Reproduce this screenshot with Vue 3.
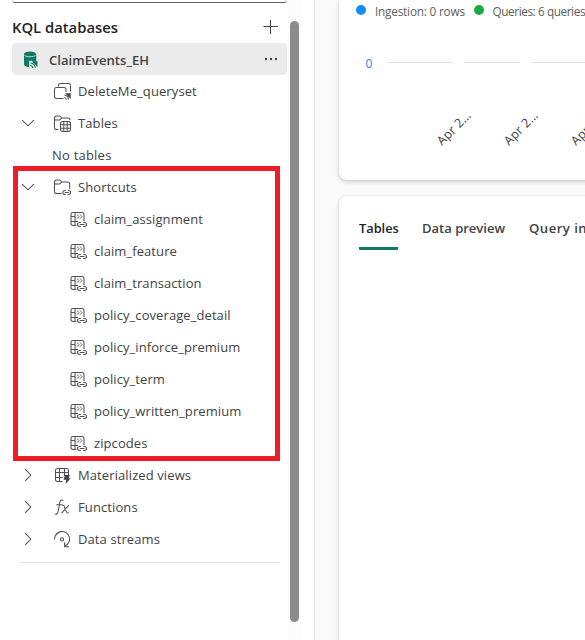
<script setup>
const rows = [
  { label: 'DeleteMe_queryset', icon: 'queryset', level: 1 },
  { label: 'Tables', icon: 'tables', level: 1, arrow: 'down' },
  { label: 'No tables', level: 0 },
  { label: 'Shortcuts', icon: 'shortcuts', level: 1, arrow: 'down' },
  { label: 'claim_assignment', icon: 'link', level: 2 },
  { label: 'claim_feature', icon: 'link', level: 2 },
  { label: 'claim_transaction', icon: 'link', level: 2 },
  { label: 'policy_coverage_detail', icon: 'link', level: 2 },
  { label: 'policy_inforce_premium', icon: 'link', level: 2 },
  { label: 'policy_term', icon: 'link', level: 2 },
  { label: 'policy_written_premium', icon: 'link', level: 2 },
  { label: 'zipcodes', icon: 'link', level: 2 },
  { label: 'Materialized views', icon: 'views', level: 1, arrow: 'right' },
  { label: 'Functions', icon: 'fx', level: 1, arrow: 'right' },
  { label: 'Data streams', icon: 'streams', level: 1, arrow: 'right' },
]
const ticks = [0, 67, 134]
</script>

<template>
  <div class="page">
    <aside class="side">
      <div class="search"></div>
      <header class="head">
        <h2>KQL databases</h2>
        <svg width="16" height="16" viewBox="0 0 16 16"><path d="M7.500 1v14M.5 7.500h14.500" class="s plus" /></svg>
      </header>
      <div class="db">
        <svg class="cyl" width="16" height="18" viewBox="0 0 16 18">
          <path d="M1 3v10.500c0 1.500 2.200 2.500 5 2.500l.3-.1V10.500h7V3z" fill="#117865" />
          <ellipse cx="7" cy="3" rx="6" ry="2.500" fill="#117865" />
          <path d="M1.300 4.200C3 6.300 11 6.300 12.700 4.200" fill="none" stroke="#e4f1ed" stroke-width=".8" />
          <path d="M6.300 9.700h3l6 6V18h-9z" fill="#ebebeb" />
          <path d="M8.700 10.300h5.800v5.800z" fill="#117865" />
          <path d="M7.500 12q4.300 .5 4.800 4.800M7.200 14.500q2.300 .2 2.700 2.500" fill="none" stroke="#117865" stroke-width="1.200" />
        </svg>
        <span class="t semi">ClaimEvents_EH</span>
        <svg class="dots" width="14" height="4" viewBox="0 0 14 4"><circle cx="2" cy="2" r="1.200" /><circle cx="7" cy="2" r="1.200" /><circle cx="12" cy="2" r="1.200" /></svg>
      </div>

      <div v-for="r in rows" :key="r.label" class="row" :class="'l' + r.level">
        <span v-if="r.level === 1" class="chev">
          <svg v-if="r.arrow" width="14" height="14" viewBox="0 0 14 14" :class="r.arrow"><path d="M4.200 1.200 9.800 7l-5.600 5.800" class="s" /></svg>
        </span>
        <svg v-if="r.icon" class="icon" width="18" height="18" viewBox="0 0 18 18">
          <g v-if="r.icon === 'queryset'" class="s">
            <path d="M4.500 3.500V2.500Q4.500 .5 6.500 .5h8Q16.500 .5 16.500 2.500V8.500M9.500 15.500H2.500Q.5 15.500 .5 13.500V6.500Q.5 4.500 2.500 4.500H10q2 0 2 2V9" />
            <path d="M11 10.300h5.700v5.700z" fill="#424242" stroke="none" />
            <path d="M10.500 12q3.500.5 4 4.500M10.300 14.500q1.500.2 2 2" />
          </g>
          <g v-else-if="r.icon === 'tables'" class="s">
            <path d="M4.500 14.500H3Q.5 14.500 .5 12.500V3Q.5 1 2.500 1h3.300l2 2H14q2 0 2 2M.5 5h5L7.800 3.200" />
            <rect x="6.500" y="6.500" width="10" height="10" rx="2.200" />
            <path d="M9.800 6.500v10M13.200 6.500v10M6.500 9.800h10M6.500 13.200h10" />
          </g>
          <g v-else-if="r.icon === 'shortcuts'" class="s">
            <path d="M7.500 14.500H3Q.5 14.500 .5 12.500V3Q.5 1 2.500 1h3.300l2 2H13.500Q15.700 3 15.700 5V10M.5 5h5L7.800 3.200" />
            <path d="M11.800 11.500h-.9a2 2 0 0 0 0 4h.9M13.700 11.500h.9a2 2 0 0 1 0 4h-.9M10.800 13.500h4" />
          </g>
          <g v-else-if="r.icon === 'link'" class="s" transform="translate(-.5 1)">
            <path d="M6.500 13.500H3.500Q1.500 13.500 1.500 11.500V2.500Q1.500 .5 3.500 .5h8.500Q14.500 .5 14.500 2.500v6.500M5.500 .5v13M1.500 4.500h4M1.500 9.500h7" />
            <path d="m7.500 2.500 2 2.100-2 2.100M10.500 2.500l2 2.100-2 2.100" stroke-width=".9" />
            <path d="M11.300 10.500H10a2 2 0 0 0 0 4h1.300M13.700 10.500h1.300a2 2 0 0 1 0 4h-1.300M10.200 12.500h4.700" />
          </g>
          <g v-else-if="r.icon === 'views'" class="s" transform="translate(0 1)">
            <path d="M8.500 13.500H3.500Q1.500 13.500 1.500 11.500V2.500Q1.500 .5 3.500 .5H12Q14.500 .5 14.500 2.500V7M5.500 .5v13M10.500 .5V8M1.500 4.500h13M1.500 9.500h7.500" />
            <path d="M11 7h4.800l-1 3.200h2l-5.300 5.800 .7-4.200H9.500z" fill="#424242" stroke="none" />
          </g>
          <g v-else-if="r.icon === 'fx'" class="s">
            <path d="M9.300 1.500C7.200.3 6.200 1.200 5.800 3.500L4.100 12.700C3.700 15.200 2.400 15.800.7 14.900M2.300 5.700h6M7.900 6.500c1.500-.8 2.200-.2 2.900 2l1.300 3.600c.7 2 1.400 2.300 2.800 1.500M15 6.100l-7.500 8" />
          </g>
          <g v-else class="s">
            <path d="M.6 8.500A7.500 7.500 0 1 1 11 14.900M10.600 11.300V15.700h4.400M2.800 4l.5-.5" />
            <circle cx="8" cy="8.300" r="1.600" />
          </g>
        </svg>
        <span class="t">{{ r.label }}</span>
      </div>
      <div class="rule"></div>
      <div class="marker"></div>
      <div class="track"><div class="thumb"></div></div>
    </aside>

    <main class="main">
      <section class="card chart">
        <svg width="246" height="180" viewBox="0 0 246 180">
          <circle cx="22" cy="10" r="5" fill="#118dff" />
          <text x="36" y="16" class="leg" textLength="90">Ingestion: 0 rows</text>
          <circle cx="140" cy="10" r="5" fill="#1aab40" />
          <text x="153.500" y="16" class="leg" textLength="93">Queries: 6 queries</text>
          <text x="26.500" y="68" class="zero">0</text>
          <path d="M48 62.500h65M125 62.500h56M192 62.500h54" stroke="#e1e1e1" />
          <text v-for="t in ticks" :key="t" class="tick" :transform="`translate(${103 + t} 146) rotate(-45)`">Apr 2…</text>
        </svg>
      </section>
      <section class="card panel">
        <nav class="tabs">
          <span class="tab on">Tables</span>
          <span class="tab preview">Data preview</span>
          <span class="tab insights">Query insights</span>
        </nav>
      </section>
    </main>
  </div>
</template>

<style>
body { overflow: hidden; }
</style>

<style scoped>
.page { display: flex; width: 585px; height: 640px; overflow: hidden; background: #fff; font-family: "Open Sans", sans-serif; font-size: 13px; color: #424242; }
.side { position: relative; box-sizing: border-box; flex: none; width: 315px; height: 640px; padding-left: 12px; border-right: 1px solid #e0e0e0; }
.search { box-sizing: border-box; width: 275px; height: 3px; border: 1px solid #d1d1d1; border-top: 0; border-bottom-color: #616161; border-radius: 0 0 4px 4px; }
.head { display: flex; align-items: center; justify-content: space-between; width: 267px; height: 40px; padding-top: 8px; box-sizing: border-box; }
h2 { margin: 0; font-size: 14.800px; font-weight: 600; line-height: 20px; color: #242424; }
.db { box-sizing: border-box; display: flex; align-items: center; width: 275px; height: 32px; padding: 0 9px 0 11px; border-radius: 4px; background: #ebebeb; }
.db .t { margin-left: 10px; padding-top: 2px; }
.cyl { margin-top: 2px; }
.dots { margin-left: auto; fill: #424242; }
.semi { font-weight: 600; letter-spacing: .05px; }
.row { display: flex; align-items: center; height: 32px; white-space: nowrap; }
.l0 { padding-left: 40px; letter-spacing: .22px; }
.l1 { letter-spacing: .1px; }
.l2 { padding-left: 58px; letter-spacing: .08px; }
.chev { display: flex; width: 42px; padding-left: 9px; box-sizing: border-box; }
.down { transform: rotate(90deg); }
.icon { flex: none; margin: 2px 6px 0 0; }
.s { fill: none; stroke: #505050; stroke-width: 1.050; }
.plus { stroke: #424242; }
.rule { width: 259px; height: 1px; margin: 7px 0 0 8px; background: #e0e0e0; }
.marker { position: absolute; box-sizing: border-box; left: 13px; top: 166px; width: 267px; height: 295px; border: 5px solid #ee1c25; }
.track { position: absolute; box-sizing: border-box; left: 287px; top: 0; width: 15px; height: 640px; padding: 21px 3px 18px; background: #fcfcfc; }
.thumb { height: 601px; border-radius: 5px; background: #8b8b8b; }
.main { display: flex; flex-direction: column; gap: 16px; flex: 1; padding-left: 24px; background: #fafafa; }
.card { flex: none; width: 300px; background: #fff; box-shadow: 0 0 2px rgba(0,0,0,.14), 0 2px 4px rgba(0,0,0,.16); }
.chart { height: 180px; border-radius: 0 0 8px 8px; }
.chart svg { display: block; }
.panel { height: 460px; border-radius: 8px 8px 0 0; }
.leg { font-size: 11.800px; fill: #605e5c; }
.zero { font-size: 12px; fill: #118dff; }
.tick { font-size: 12.500px; letter-spacing: .2px; fill: #424242; }
.tabs { display: flex; gap: 24px; padding: 22px 0 0 20px; white-space: nowrap; font-weight: 600; line-height: 20px; }
.tab { height: 29px; border-bottom: 3px solid transparent; }
.on { width: 39px; color: #242424; border-bottom-color: #117865; border-radius: 1px; font-size: 12.800px; }
.preview { width: 83px; }
.insights { font-size: 13.200px; letter-spacing: .45px; }
</style>
